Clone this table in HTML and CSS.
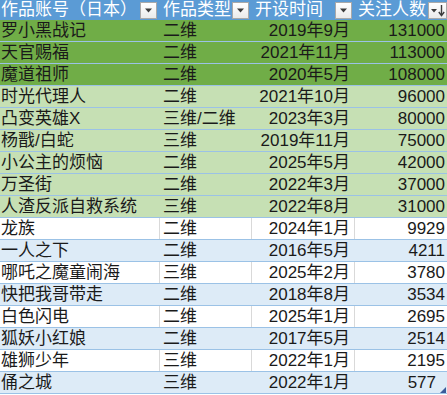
FILE: index.html
```html
<!DOCTYPE html>
<html lang="zh">
<head>
<meta charset="utf-8">
<link rel="stylesheet" href="styles.css">
</head>
<body>
<div class="sheet">
  <div class="row head">
    <div class="cell c1"><span>作品账号（日本）</span><span class="filter"><svg width="9" height="5" viewBox="0 0 9 5"><path d="M1 0.5h7L4.5 4.5z" fill="#3c3c3c"/></svg></span></div>
    <div class="cell"><span>作品类型</span><span class="filter"><svg width="9" height="5" viewBox="0 0 9 5"><path d="M1 0.5h7L4.5 4.5z" fill="#3c3c3c"/></svg></span></div>
    <div class="cell"><span>开设时间</span><span class="filter"><svg width="9" height="5" viewBox="0 0 9 5"><path d="M1 0.5h7L4.5 4.5z" fill="#3c3c3c"/></svg></span></div>
    <div class="cell"><span>关注人数</span><span class="filter sort"><svg width="17" height="15" viewBox="0 0 17 15"><path d="M2 6h6L5 9.5z" fill="#3c3c3c"/><path d="M12.5 2v10" stroke="#3c3c3c" stroke-width="1.4"/><path d="M9.8 9l2.7 3.5L15.2 9" fill="none" stroke="#3c3c3c" stroke-width="1.4"/></svg></span></div>
  </div>
  <div class="row dg"><div class="cell c1">罗小黑战记</div><div class="cell">二维</div><div class="cell num">2019年9月</div><div class="cell num">131000</div></div>
  <div class="row dg"><div class="cell c1">天官赐福</div><div class="cell">二维</div><div class="cell num">2021年11月</div><div class="cell num">113000</div></div>
  <div class="row dg"><div class="cell c1">魔道祖师</div><div class="cell">二维</div><div class="cell num">2020年5月</div><div class="cell num">108000</div></div>
  <div class="row lg"><div class="cell c1">时光代理人</div><div class="cell">二维</div><div class="cell num">2021年10月</div><div class="cell num">96000</div></div>
  <div class="row lg"><div class="cell c1">凸变英雄X</div><div class="cell">三维/二维</div><div class="cell num">2023年3月</div><div class="cell num">80000</div></div>
  <div class="row lg"><div class="cell c1">杨戬/白蛇</div><div class="cell">三维</div><div class="cell num">2019年11月</div><div class="cell num">75000</div></div>
  <div class="row lg"><div class="cell c1">小公主的烦恼</div><div class="cell">二维</div><div class="cell num">2025年5月</div><div class="cell num">42000</div></div>
  <div class="row lg"><div class="cell c1">万圣街</div><div class="cell">二维</div><div class="cell num">2022年3月</div><div class="cell num">37000</div></div>
  <div class="row lg"><div class="cell c1">人渣反派自救系统</div><div class="cell">三维</div><div class="cell num">2022年8月</div><div class="cell num">31000</div></div>
  <div class="row wh"><div class="cell c1">龙族</div><div class="cell">二维</div><div class="cell num">2024年1月</div><div class="cell num">9929</div></div>
  <div class="row bl"><div class="cell c1">一人之下</div><div class="cell">二维</div><div class="cell num">2016年5月</div><div class="cell num">4211</div></div>
  <div class="row wh"><div class="cell c1">哪吒之魔童闹海</div><div class="cell">三维</div><div class="cell num">2025年2月</div><div class="cell num">3780</div></div>
  <div class="row bl"><div class="cell c1">快把我哥带走</div><div class="cell">二维</div><div class="cell num">2018年8月</div><div class="cell num">3534</div></div>
  <div class="row wh"><div class="cell c1">白色闪电</div><div class="cell">二维</div><div class="cell num">2025年1月</div><div class="cell num">2695</div></div>
  <div class="row bl"><div class="cell c1">狐妖小红娘</div><div class="cell">二维</div><div class="cell num">2017年5月</div><div class="cell num">2514</div></div>
  <div class="row wh"><div class="cell c1">雄狮少年</div><div class="cell">三维</div><div class="cell num">2022年1月</div><div class="cell num">2195</div></div>
  <div class="row bl"><div class="cell c1">俑之城</div><div class="cell">三维</div><div class="cell num">2022年1月</div><div class="cell num last">577<span class="handle"></span></div></div>
</div>
</body>
</html>
```

FILE: styles.css
```css
html, body {
  margin: 0;
  padding: 0;
  background: #ffffff;
  overflow: hidden;
}

.sheet {
  width: 450px;
  font-family: "Liberation Sans", "Noto Sans CJK SC", sans-serif;
  font-size: 17px;
  color: #1a1a1a;
}

.row {
  display: grid;
  grid-template-columns: 160px 92px 103px 95px;
  height: 22px;
  box-sizing: border-box;
  border-bottom: 1px solid #9bc2e6;
}

.cell {
  display: flex;
  align-items: center;
  padding: 0 3px;
  line-height: 21px;
  white-space: nowrap;
  overflow: hidden;
  border-right: 1px solid transparent;
  box-sizing: border-box;
}

.cell.c1 {
  padding-left: 1px;
}

.cell.num {
  justify-content: flex-end;
  padding-right: 4px;
}

.head {
  height: 20px;
  background: #5b9bd5;
  color: #ffffff;
  border-bottom: none;
}

.head .cell {
  justify-content: space-between;
  padding-right: 2px;
  line-height: 20px;
}

.filter {
  width: 17px;
  height: 17px;
  box-sizing: border-box;
  border: 1px solid #a9a9a9;
  background: linear-gradient(#ffffff, #ebebeb);
  display: flex;
  align-items: center;
  justify-content: center;
  flex-shrink: 0;
}

.filter.sort {
  width: 19px;
}

.dg { background: #70ad47; }
.lg { background: #c6e0b4; }
.bl { background: #ddebf7; }
.wh { background: #ffffff; }
.wh .cell { border-right-color: #d9d9d9; }

.cell.last {
  position: relative;
  padding-right: 13px;
}

.handle {
  position: absolute;
  right: 3px;
  bottom: 0;
  width: 0;
  height: 0;
  border-left: 6px solid transparent;
  border-bottom: 6px solid #3a5a9a;
}
```
